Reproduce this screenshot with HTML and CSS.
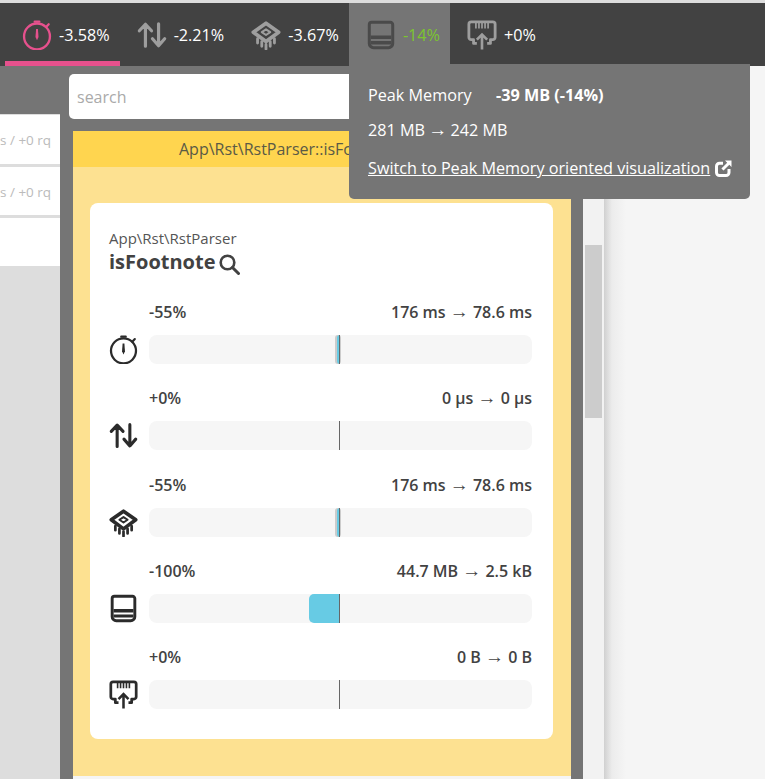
FILE: index.html
```html
<!DOCTYPE html>
<html lang="en">
<head>
    <meta charset="UTF-8">
    <meta name="viewport" content="width=device-width, initial-scale=1.0">
    <title>Profile comparison</title>
    <link rel="stylesheet" href="styles.css">
</head>
<body>
    <svg class="sprites" xmlns="http://www.w3.org/2000/svg">
        <symbol id="i-timer" viewBox="0 0 32 32">
            <circle cx="16" cy="17.500" r="13.800" fill="none" stroke="currentColor" stroke-width="2.500"/>
            <path d="M13.500 1.800h5M28.500 4.500l-2.800 3" fill="none" stroke="currentColor" stroke-width="2.400" stroke-linecap="round"/>
            <path d="M15 9.500h2l.6 8.500-1.600 3.500-1.600-3.500z" fill="currentColor"/>
        </symbol>
        <symbol id="i-arrows" viewBox="0 0 32 32">
            <path d="M9 28V5M2.500 11.500 9 4.500l6.500 7M23 4v23M16.500 20l6.500 7.500 6.500-7.500" fill="none" stroke="currentColor" stroke-width="3.400" stroke-linejoin="round" stroke-linecap="round"/>
        </symbol>
        <symbol id="i-chip" viewBox="0 0 32 32">
            <path d="M16 3.500 29.500 13 16 23 2.500 13z" fill="none" stroke="currentColor" stroke-width="4" stroke-linejoin="round"/>
            <path d="M16 10 20.500 13 16 16 11.500 13z" fill="none" stroke="currentColor" stroke-width="2.200" stroke-linejoin="round"/>
            <path d="M7 20v4.500M11.500 23v5M16 26v5M20.500 23v5M25 20v4.500" fill="none" stroke="currentColor" stroke-width="3" stroke-linecap="round"/>
        </symbol>
        <symbol id="i-memory" viewBox="0 0 32 32">
            <path d="M6 2.500h20a2.500 2.500 0 0 1 2.500 2.500v20a4.500 4.500 0 0 1-4.500 4.500H8A4.500 4.500 0 0 1 3.500 25V5A2.500 2.500 0 0 1 6 2.500z" fill="none" stroke="currentColor" stroke-width="3.200"/>
            <path d="M5 16.500h22v3.800H5zM5 22.500h22v3.500H5z" fill="currentColor"/>
        </symbol>
        <symbol id="i-network" viewBox="0 0 32 32">
            <path d="M10.500 25H7v-4H4.500A2.500 2.500 0 0 1 2 18.500V4.500A2.500 2.500 0 0 1 4.500 2h23A2.500 2.500 0 0 1 30 4.500v14a2.500 2.500 0 0 1-2.500 2.500H25v4h-3.500" fill="none" stroke="currentColor" stroke-width="3" stroke-linejoin="round"/>
            <path d="M9.500 3v6M12.750 3v6M16 3v6M19.250 3v6M22.500 3v6" fill="none" stroke="currentColor" stroke-width="1.800"/>
            <path d="M16 31.500V15.500M10.500 21 16 15.500l5.500 5.500" fill="none" stroke="currentColor" stroke-width="2.800"/>
        </symbol>
        <symbol id="i-search" viewBox="0 0 21 21">
            <circle cx="8.500" cy="8.500" r="6.800" fill="none" stroke="currentColor" stroke-width="2.600"/>
            <path d="M13.500 13.500 19.500 19.500" stroke="currentColor" stroke-width="3" stroke-linecap="round"/>
        </symbol>
        <symbol id="i-external" viewBox="0 0 17 17">
            <path d="M8 3.300H4.500a3 3 0 0 0-3 3V12.500a3 3 0 0 0 3 3h6.500a3 3 0 0 0 3-3V9" fill="none" stroke="currentColor" stroke-width="3"/>
            <path d="M10 .5h6.500V7L14.300 4.800 8.500 10.600 6.400 8.500l5.800-5.800z" fill="currentColor"/>
        </symbol>
    </svg>

    <nav class="topbar">
        <div class="tab tab-selected">
            <svg class="tab-icon"><use href="#i-timer"/></svg>
            <span>-3.58%</span>
        </div>
        <div class="tab">
            <svg class="tab-icon"><use href="#i-arrows"/></svg>
            <span>-2.21%</span>
        </div>
        <div class="tab">
            <svg class="tab-icon"><use href="#i-chip"/></svg>
            <span>-3.67%</span>
        </div>
        <div class="tab tab-open">
            <svg class="tab-icon"><use href="#i-memory"/></svg>
            <span class="good">-14%</span>
        </div>
        <div class="tab">
            <svg class="tab-icon"><use href="#i-network"/></svg>
            <span>+0%</span>
        </div>

        <div class="tooltip">
            <p class="tip-head"><span class="tip-name">Peak Memory</span><b>-39 MB (-14%)</b></p>
            <p class="tip-values">281 MB <span class="arrow">→</span> 242 MB</p>
            <p class="tip-link"><a href="#">Switch to Peak Memory oriented visualization</a><svg class="ext-icon"><use href="#i-external"/></svg></p>
        </div>
    </nav>

    <div class="layout">
        <aside class="sidebar">
            <div class="side-row">s / +0 rq</div>
            <div class="side-row">s / +0 rq</div>
            <div class="side-row"></div>
        </aside>

        <main class="content">
            <input class="search" type="text" placeholder="search">

            <section class="panel">
                <h2 class="panel-title">App\Rst\RstParser::isFootnote</h2>
                <div class="panel-body">
                    <div class="card">
                        <div class="card-ns">App\Rst\RstParser</div>
                        <h3 class="card-name">isFootnote<svg class="search-icon"><use href="#i-search"/></svg></h3>

                        <div class="metrics">
                            <div class="metric">
                                <svg class="metric-icon"><use href="#i-timer"/></svg>
                                <div class="metric-main">
                                    <div class="metric-text"><span>-55%</span><span>176 ms <span class="arrow">→</span> 78.6 ms</span></div>
                                    <div class="bar"><i class="bar-old"></i><i class="bar-fill" style="width: 3px"></i><i class="bar-zero"></i></div>
                                </div>
                            </div>
                            <div class="metric">
                                <svg class="metric-icon"><use href="#i-arrows"/></svg>
                                <div class="metric-main">
                                    <div class="metric-text"><span>+0%</span><span>0 µs <span class="arrow">→</span> 0 µs</span></div>
                                    <div class="bar"><i class="bar-zero"></i></div>
                                </div>
                            </div>
                            <div class="metric">
                                <svg class="metric-icon"><use href="#i-chip"/></svg>
                                <div class="metric-main">
                                    <div class="metric-text"><span>-55%</span><span>176 ms <span class="arrow">→</span> 78.6 ms</span></div>
                                    <div class="bar"><i class="bar-old"></i><i class="bar-fill" style="width: 3px"></i><i class="bar-zero"></i></div>
                                </div>
                            </div>
                            <div class="metric">
                                <svg class="metric-icon"><use href="#i-memory"/></svg>
                                <div class="metric-main">
                                    <div class="metric-text"><span>-100%</span><span>44.7 MB <span class="arrow">→</span> 2.5 kB</span></div>
                                    <div class="bar"><i class="bar-fill" style="width: 31px"></i><i class="bar-zero"></i></div>
                                </div>
                            </div>
                            <div class="metric">
                                <svg class="metric-icon"><use href="#i-network"/></svg>
                                <div class="metric-main">
                                    <div class="metric-text"><span>+0%</span><span>0 B <span class="arrow">→</span> 0 B</span></div>
                                    <div class="bar"><i class="bar-zero"></i></div>
                                </div>
                            </div>
                        </div>
                    </div>
                </div>
            </section>
        </main>

        <div class="scrollbar"><div class="scroll-thumb"></div></div>
        <div class="details"></div>
    </div>
</body>
</html>
```

FILE: styles.css
```css
* {
    box-sizing: border-box;
}
body {
    margin: 0;
    height: 779px;
    overflow: hidden;
    display: flex;
    flex-direction: column;
    font-family: "Open Sans", Arial, sans-serif;
    font-size: 16px;
    background-color: #f5f5f5;
    border-top: 3px solid #dddddd;
}
.sprites {
    display: none;
}
.arrow {
    font-family: "Liberation Sans", Arial, sans-serif;
    font-size: 19px;
    font-weight: 400;
    line-height: 1;
}

/* top navigation */
.topbar {
    position: relative;
    z-index: 2;
    flex: none;
    display: flex;
    height: 63px;
    padding-left: 5px;
    background-color: #424242;
    color: #ffffff;
    font-size: 16.2px;
}
.tab {
    display: flex;
    align-items: center;
    gap: 7px;
    padding: 0 10px 0 17px;
}
.tab-selected {
    box-shadow: inset 0 -5px 0 #e6518d;
}
.tab-open {
    background-color: #757575;
}
.tab-icon {
    width: 30px;
    height: 30px;
    color: #9e9e9e;
    flex: none;
}
.tab-selected .tab-icon {
    color: #e6518d;
}
.tab-open .tab-icon {
    color: #4a4a4a;
}
.good {
    color: #7cc52e;
}
.tooltip {
    position: absolute;
    left: 349px;
    top: 61px;
    width: 401px;
    height: 135px;
    padding: 20px 0 0 19px;
    background-color: #757575;
    border-radius: 0 0 5px 5px;
    font-size: 16.2px;
}
.tooltip p {
    margin: 0;
    line-height: 22px;
    white-space: nowrap;
}
.tooltip .arrow {
    margin: 0 -1px;
}
.tip-name {
    display: inline-block;
    width: 128px;
}
.tip-values {
    padding-top: 13px;
}
.tip-link {
    display: flex;
    align-items: center;
    gap: 5px;
    padding-top: 16px;
}
.tip-link a {
    color: #ffffff;
}
.ext-icon {
    width: 17px;
    height: 17px;
    flex: none;
}

/* page below the navigation */
.layout {
    flex: 1;
    display: flex;
    min-height: 0;
}
.sidebar {
    flex: none;
    width: 60px;
    padding-top: 48px;
    background: linear-gradient(#757575 48px, #dddddd 48px);
}
.side-row {
    height: 48px;
    margin-top: 3px;
    padding-right: 13px;
    background-color: #ffffff;
    color: #bbbbbb;
    font-size: 13.5px;
    line-height: 50px;
    text-align: right;
    white-space: nowrap;
}
.side-row:first-child {
    height: 49px;
    margin-top: 1px;
}
.content {
    flex: none;
    width: 523px;
    padding-top: 8px;
    background-color: #757575;
}
.search {
    display: block;
    width: 500px;
    height: 45px;
    margin-left: 9px;
    padding: 0 8px;
    border: none;
    border-radius: 5px;
    background-color: #ffffff;
    font-family: inherit;
    font-size: 16px;
}
.search::placeholder {
    color: #aaaaaa;
}
.panel {
    width: 498px;
    height: 648px;
    margin: 12px 0 0 13px;
    border-bottom: 3px solid #f5f5f5;
}
.panel-title {
    margin: 0;
    height: 36px;
    padding-left: 106px;
    background-color: #ffd54f;
    color: #5a5a46;
    font-size: 16px;
    font-weight: 400;
    line-height: 36px;
    white-space: nowrap;
}
.panel-body {
    height: 609px;
    padding: 36px 18px 0 17px;
    background-color: #fde191;
}
.card {
    height: 536px;
    padding: 26px 21px 0 19px;
    background-color: #ffffff;
    border-radius: 8px;
    color: #424242;
}
.card-ns {
    font-size: 15px;
    line-height: 19px;
    color: #555555;
}
.card-name {
    display: flex;
    align-items: center;
    gap: 3px;
    margin: 0;
    font-size: 20px;
    font-weight: 700;
    line-height: 28px;
}
.search-icon {
    width: 21px;
    height: 21px;
    margin-top: 5px;
}
.metrics {
    display: flex;
    flex-direction: column;
    gap: 24.25px;
    margin-top: 26px;
}
.metric {
    display: flex;
    align-items: flex-end;
}
.metric-icon {
    flex: none;
    width: 29px;
    height: 29px;
    margin-right: 11px;
    color: #2b2b2b;
}
.metric-main {
    flex: 1;
}
.metric-text {
    display: flex;
    justify-content: space-between;
    height: 33px;
    font-size: 16px;
    font-weight: 600;
    line-height: 20px;
}
.bar {
    position: relative;
    height: 29px;
    background-color: #f6f6f6;
    border-radius: 8px;
}
.bar-zero {
    position: absolute;
    left: 190px;
    top: 0;
    bottom: 0;
    width: 1px;
    background-color: #666666;
}
.bar-fill {
    position: absolute;
    right: 192px;
    top: 0;
    bottom: 0;
    background-color: #67cbe4;
    border-radius: 5px 0 0 5px;
}
.bar-old {
    position: absolute;
    left: 186px;
    top: 0;
    bottom: 0;
    width: 6px;
    background-color: #cccccc;
    border-radius: 3px;
}

/* scrollbar and right side */
.scrollbar {
    flex: none;
    width: 21px;
    padding: 179px 2px 0;
    background-color: #f2f2f2;
}
.scroll-thumb {
    height: 173px;
    background-color: #cccccc;
}
.details {
    flex: 1;
    background: linear-gradient(to right, #d0d0d0, #ececec 8px, #f5f5f5 22px);
}
```
